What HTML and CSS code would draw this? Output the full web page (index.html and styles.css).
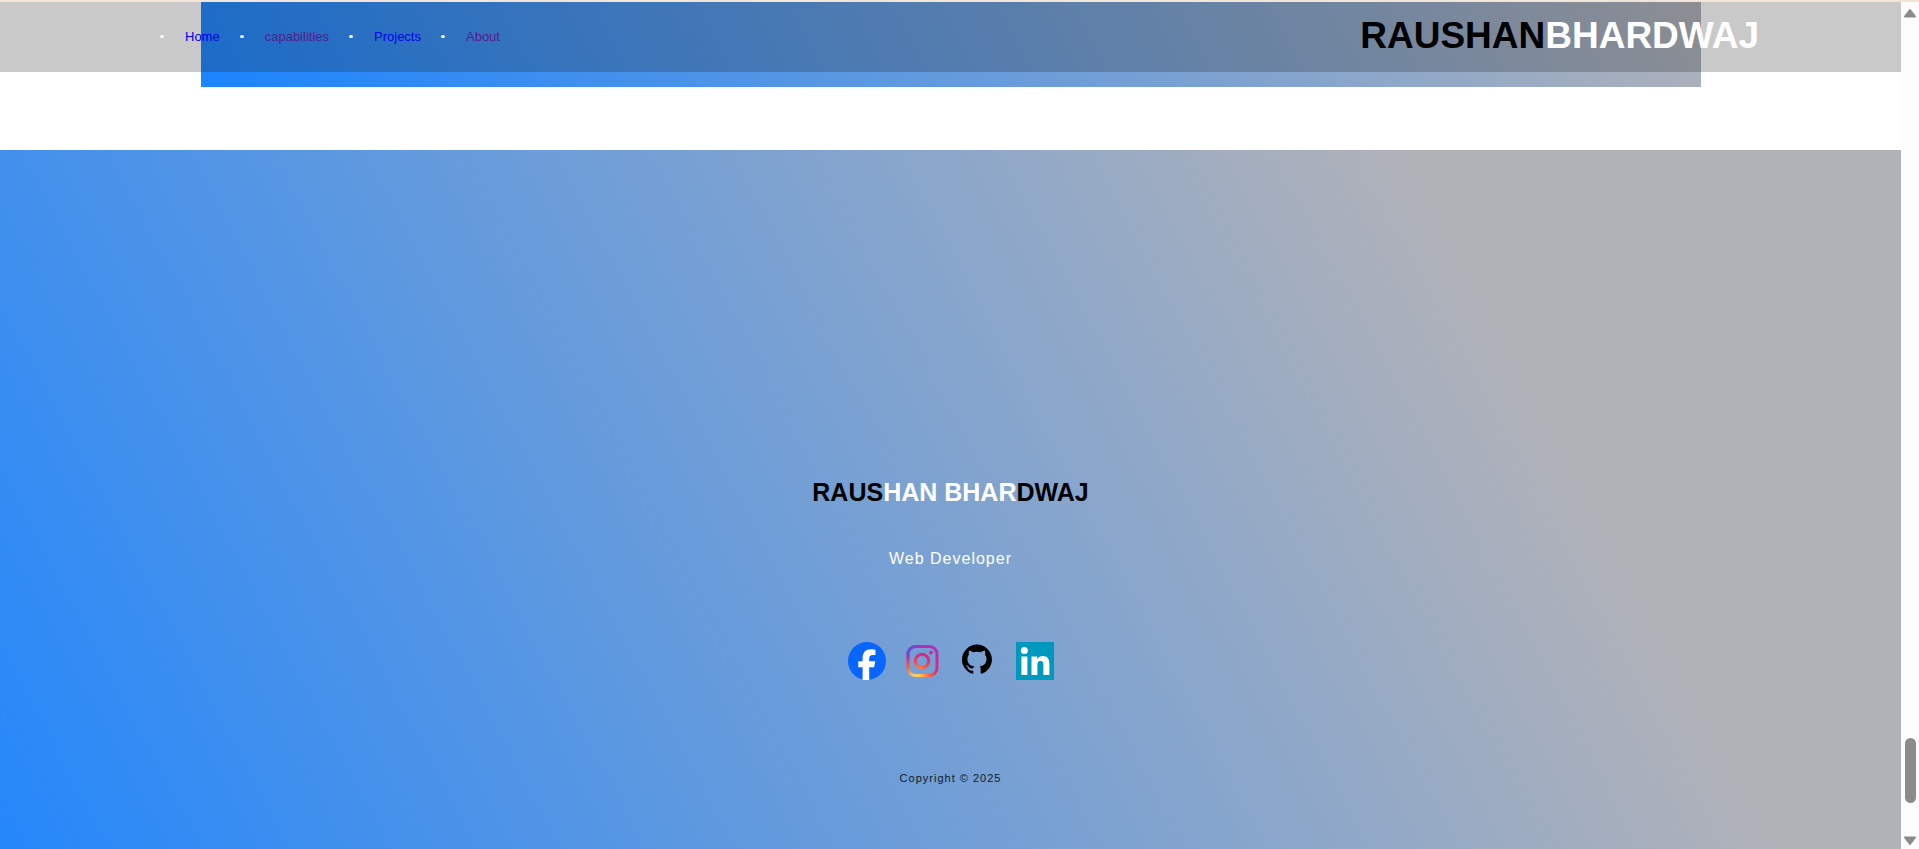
FILE: index.html
```html
<!DOCTYPE html>
<html lang="en">
<head>
<meta charset="utf-8">
<title>Raushan Bhardwaj</title>
<link rel="stylesheet" href="styles.css">
</head>
<body>
<div class="page">
  <header class="topbar">
    <nav>
      <ul class="menu">
        <li><a href="#home">Home</a></li>
        <li><a class="visited" href="#capabilities">capabilities</a></li>
        <li><a href="#projects">Projects</a></li>
        <li><a class="visited" href="#about">About</a></li>
      </ul>
    </nav>
    <div class="logo">RAUSHAN<span>BHARDWAJ</span></div>
  </header>
  <main class="content"><div class="panel"></div></main>
  <footer class="footer" id="about">
    <h2 class="name">RAUS<span>HAN BHAR</span>DWAJ</h2>
    <p class="role">Web Developer</p>
    <div class="social">
      <a href="#facebook" aria-label="Facebook">
        <svg viewBox="0 0 38 38"><circle cx="19" cy="19" r="19" fill="#0866ff"/><path fill="#fff" d="M14.6 38V25.2H10.3V19.2H14.6V16.5C14.6 10.3 17.5 7.2 23.2 7.2C24.9 7.2 26.6 7.5 27.4 7.8V13.2C26.9 13.1 26 13.1 25 13.1C22 13.1 21.2 14.5 21.2 17V19.2H27.2L26.1 25.2H21.2V38Z"/></svg>
      </a>
      <a href="#instagram" aria-label="Instagram">
        <svg viewBox="0 0 38 38"><defs><radialGradient id="ig" gradientUnits="userSpaceOnUse" cx="12" cy="37" r="34"><stop offset="0" stop-color="#ffdd65"/><stop offset=".15" stop-color="#ffc85a"/><stop offset=".42" stop-color="#ff5a3c"/><stop offset=".65" stop-color="#dc2d78"/><stop offset="1" stop-color="#b42db4"/></radialGradient><radialGradient id="igb" gradientUnits="userSpaceOnUse" cx="1" cy="4" r="17"><stop offset="0" stop-color="#3c5ae6"/><stop offset=".35" stop-color="#5a50dc"/><stop offset="1" stop-color="#7846d2" stop-opacity="0"/></radialGradient></defs>
        <g fill="none" stroke="url(#ig)" stroke-width="3"><rect x="4" y="4.5" width="29" height="29" rx="7.5"/><circle cx="18" cy="19" r="6.7"/></g><circle cx="27" cy="10.5" r="1.9" fill="#c82d96"/><rect x="4" y="4.5" width="29" height="29" rx="7.5" fill="none" stroke="url(#igb)" stroke-width="3"/></svg>
      </a>
      <a href="#github" aria-label="GitHub">
        <svg viewBox="0 0 38 38"><path transform="translate(2 2.2) scale(1.25)" fill="#000" d="M12 .3a12 12 0 0 0-3.8 23.38c.6.12.83-.26.83-.57L9 21.07c-3.34.72-4.04-1.61-4.04-1.61-.55-1.39-1.34-1.76-1.34-1.76-1.08-.74.09-.73.09-.73 1.2.09 1.83 1.24 1.83 1.24 1.08 1.83 2.81 1.3 3.5 1 .1-.78.42-1.31.76-1.61-2.67-.3-5.47-1.33-5.47-5.93 0-1.31.47-2.38 1.24-3.22-.14-.3-.54-1.52.1-3.18 0 0 1-.32 3.3 1.23a11.5 11.5 0 0 1 6 0c2.28-1.55 3.29-1.23 3.29-1.23.64 1.66.24 2.88.12 3.18a4.65 4.65 0 0 1 1.23 3.22c0 4.61-2.8 5.63-5.48 5.92.42.36.81 1.1.81 2.22l-.01 3.29c0 .31.2.69.82.57A12 12 0 0 0 12 .3Z"/></svg>
      </a>
      <a href="#linkedin" aria-label="LinkedIn">
        <svg viewBox="0 0 38 38"><path fill="#0098bf" d="M0 0h38v38H0z"/><g fill="#fff"><circle cx="8.4" cy="8.4" r="3.5"/><path d="M5.4 14.5h6V33h-6zM15.5 14.5h5.7V17c.8-1.5 2.8-3 5.700-3 5.500 0 6.500 3.900 6.500 8.700V33h-6v-9.200c0-2.400 0-4.800-2.900-4.800s-3.100 2.200-3.100 4.600V33h-5.900z"/></g></svg>
      </a>
    </div>
    <p class="copyright">Copyright © 2025</p>
  </footer>
</div>
<div class="scrollbar" aria-hidden="true">
  <svg class="arrow" viewBox="0 0 14 10"><path d="M7 2 12 8.500H2Z"/></svg>
  <div class="thumb"></div>
  <svg class="arrow" viewBox="0 0 14 10"><path d="M7 8 12 1.500H2Z"/></svg>
</div>
</body>
</html>
```
FILE: styles.css
```css
* {
  box-sizing: border-box;
}

body {
  display: flex;
  height: 100vh;
  margin: 0;
  overflow: hidden;
  border-top: 2px solid #f3e6d8;
  background: #fff;
  font-family: "Liberation Sans", Arial, sans-serif;
}

.page {
  position: relative;
  flex: 1;
  overflow: hidden;
}

.topbar {
  position: absolute;
  top: 0;
  left: 0;
  right: 0;
  display: flex;
  align-items: center;
  justify-content: space-between;
  height: 70px;
  padding: 0 142px 2px 160px;
  background: rgba(30, 30, 30, 0.24);
}

.menu {
  display: flex;
  gap: 20px;
  margin: 0;
  padding: 0;
  list-style: none;
  font-size: 13px;
}

.menu li {
  display: flex;
  align-items: center;
  gap: 21px;
}

.menu li::before {
  content: "";
  width: 4px;
  height: 3px;
  border-radius: 50%;
  background: #fff;
}

.menu a {
  color: #00e;
  text-decoration: none;
}

.menu .visited {
  color: #551a8b;
}

.logo {
  color: #000;
  font-size: 37px;
  font-weight: bold;
}

.logo span {
  color: #fff;
}

.content {
  padding: 0 200px 63px 201px;
}

.panel {
  height: 85px;
  background: linear-gradient(62deg, #1b84ff, #b1b2b8 79%) bottom / 100% 900px;
}

.footer {
  display: flex;
  flex-direction: column;
  align-items: center;
  height: 110vh;
  padding-top: 326px;
  background: linear-gradient(62deg, #1b84ff, #b1b2b8 79.5%);
}

.name {
  margin: 0;
  color: #000;
  font-size: 25px;
  line-height: 32px;
}

.name span {
  color: #fff;
}

.role {
  margin: 40px 0 72px;
  color: #fff;
  font-size: 16px;
  line-height: 22px;
  letter-spacing: 1px;
}

.social {
  display: flex;
  gap: 18px;
}

.social a,
.social svg {
  display: block;
  width: 38px;
  height: 38px;
}

.copyright {
  margin: 90px 0 0;
  color: #111a26;
  font-size: 11px;
  line-height: 16px;
  letter-spacing: 1px;
}

.scrollbar {
  display: flex;
  flex-direction: column;
  align-items: center;
  width: 18px;
  padding: 5px 0 2px;
  background: #fcfcfc;
}

.arrow {
  width: 14px;
  height: 12px;
  fill: #8b8b8b;
  stroke: #8b8b8b;
  stroke-width: 2;
  stroke-linejoin: round;
}

.thumb {
  width: 11px;
  height: 65px;
  margin: auto 0 32px;
  border-radius: 6px;
  background: #8b8b8b;
}
```
